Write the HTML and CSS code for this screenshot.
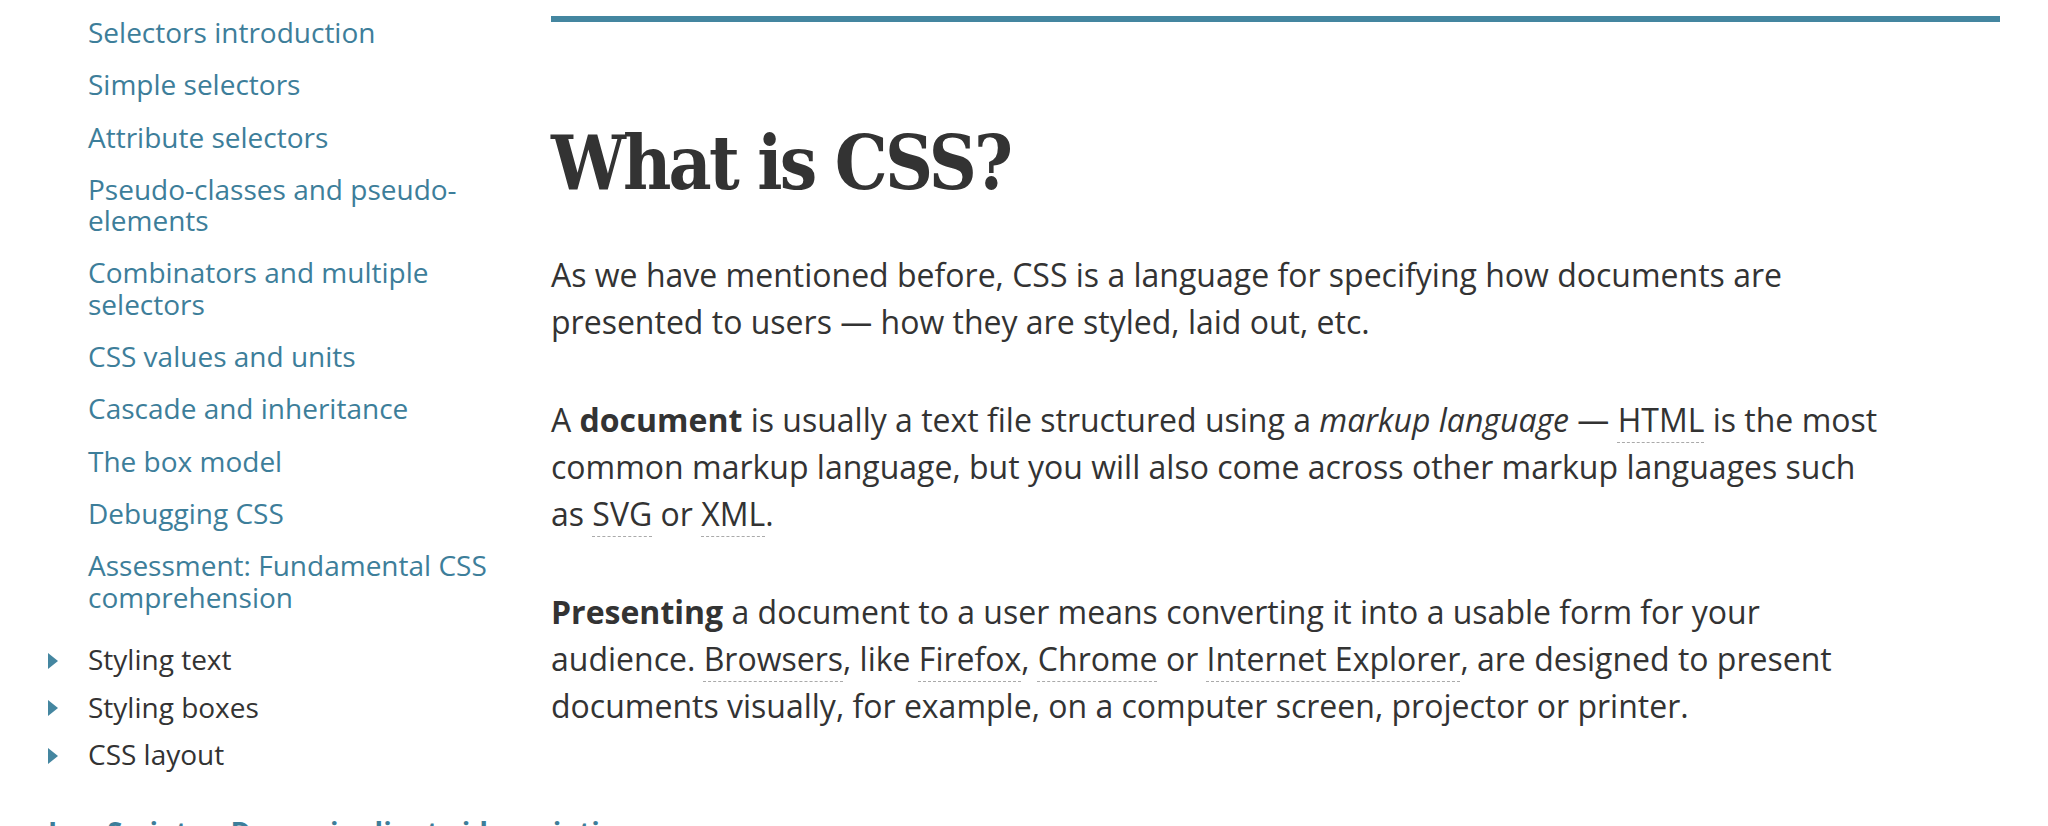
FILE: index.html
```html
<!DOCTYPE html>
<html lang="en">
<head>
<meta charset="utf-8">
<title>What is CSS?</title>
<link rel="stylesheet" href="styles.css">
</head>
<body>
<div class="page">
  <nav class="sidebar">
    <ul class="sublist">
      <li><a href="#">Selectors introduction</a></li>
      <li><a href="#">Simple selectors</a></li>
      <li><a href="#">Attribute selectors</a></li>
      <li><a href="#">Pseudo-classes and pseudo-elements</a></li>
      <li><a href="#">Combinators and multiple selectors</a></li>
      <li><a href="#">CSS values and units</a></li>
      <li><a href="#">Cascade and inheritance</a></li>
      <li><a href="#">The box model</a></li>
      <li><a href="#">Debugging CSS</a></li>
      <li><a href="#">Assessment: Fundamental CSS comprehension</a></li>
    </ul>
    <ul class="toplist">
      <li><span class="tri"></span>Styling text</li>
      <li><span class="tri"></span>Styling boxes</li>
      <li><span class="tri"></span>CSS layout</li>
    </ul>
    <div class="section-title">JavaScript — Dynamic client-side scripting</div>
  </nav>
  <main class="content">
    <div class="topbar"></div>
    <h1>What is CSS?</h1>
    <p>As we have mentioned before, CSS is a language for specifying how documents are presented to users — how they are styled, laid out, etc.</p>
    <p>A <strong>document</strong> is usually a text file structured using a <em>markup language</em> — <span class="gl">HTML</span> is the most common markup language, but you will also come across other markup languages such as <span class="gl">SVG</span> or <span class="gl">XML</span>.</p>
    <p><strong>Presenting</strong> a document to a user means converting it into a usable form for your audience. <span class="gl">Browsers</span>, like <span class="gl">Firefox</span>, <span class="gl">Chrome</span> or <span class="gl">Internet Explorer</span>, are designed to present documents visually, for example, on a computer screen, projector or printer.</p>
  </main>
</div>
</body>
</html>
```
FILE: styles.css
```css
html, body {
  margin: 0;
  padding: 0;
  background: #fff;
}
body {
  font-family: "Open Sans", "DejaVu Sans", sans-serif;
  color: #333;
  overflow: hidden;
  height: 826px;
}
.page {
  display: grid;
  grid-template-columns: 551px 1449px;
  width: 2048px;
}
.sidebar {
  font-size: 28px;
  line-height: 31.3px;
}
.sidebar ul {
  list-style: none;
  margin: 0;
  padding: 0;
}
.sublist {
  padding-top: 17px !important;
}
.sublist li {
  padding-left: 88px;
  margin-bottom: 21px;
  width: 430px;
}
.sublist a {
  color: #3d7e9a;
  text-decoration: none;
}
.toplist {
  margin-top: 31px !important;
}
.toplist li {
  display: flex;
  align-items: center;
  padding-left: 48px;
  margin-bottom: 16.5px;
  color: #333;
}
.tri {
  width: 0;
  height: 0;
  border-top: 8.5px solid transparent;
  border-bottom: 8.5px solid transparent;
  border-left: 10px solid #4486a0;
  margin-right: 30px;
  margin-top: 2px;
}
.section-title {
  margin-top: 46px;
  padding-left: 48px;
  color: #3d7e9a;
  font-weight: 700;
  white-space: nowrap;
}
.content {
  padding-top: 16px;
}
.topbar {
  height: 6px;
  background: #4486a0;
}
h1 {
  font-family: "DejaVu Serif Condensed", "DejaVu Serif", serif;
  font-weight: 700;
  font-size: 74px;
  letter-spacing: -2.8px;
  line-height: 1.2;
  margin: 97px 0 0 0;
  color: #333;
}
p {
  font-size: 32px;
  line-height: 47px;
  margin: 43px 0 51px 0;
  max-width: 1340px;
}
.gl {
  text-decoration-line: underline;
  text-decoration-style: dashed;
  text-decoration-color: #aaa;
  text-decoration-thickness: 1px;
  text-underline-offset: 10px;
}
```
